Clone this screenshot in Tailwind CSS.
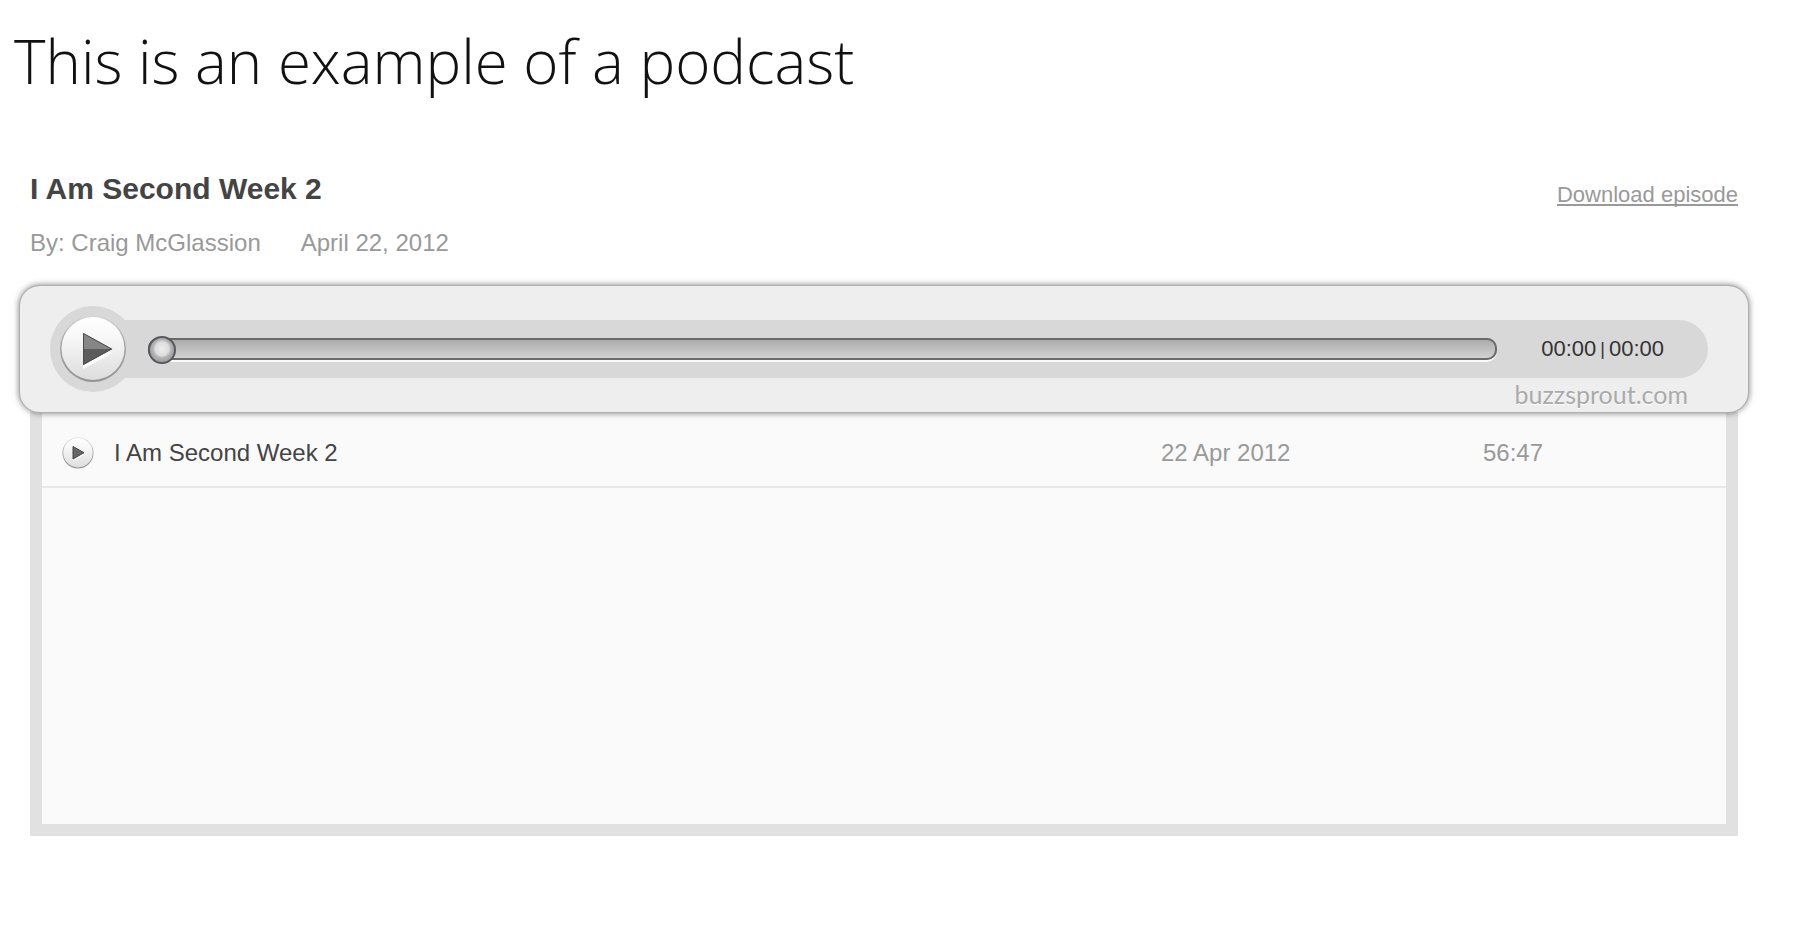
<!DOCTYPE html>
<html lang="en">
  <head>
    <meta charset="UTF-8" />
    <meta name="viewport" content="width=device-width, initial-scale=1" />
    <title>This is an example of a podcast</title>
    <script src="https://cdn.jsdelivr.net/npm/@tailwindcss/browser@4"></script>
  </head>
  <body class="bg-white min-h-screen font-['Liberation_Sans',Arial,sans-serif]">
    <h1 class="pt-[31px] pl-3.5 text-6xl/[60px] font-light text-[#111] font-['Open_Sans',sans-serif]">
      This is an example of a podcast
    </h1>

    <main class="mt-20 ml-5 mr-14">
      <!-- episode info -->
      <header class="flex items-start justify-between px-2.5">
        <div>
          <h2 class="text-3xl/9 font-bold text-[#444]">I Am Second Week 2</h2>
          <p class="mt-5 flex gap-10 text-2xl text-[#999]">
            <span>By: Craig McGlassion</span>
            <span>April 22, 2012</span>
          </p>
        </div>
        <a href="#" class="mt-2.5 text-[22px]/7 text-[#999] underline decoration-2 underline-offset-2 [text-decoration-skip-ink:none]">Download episode</a>
      </header>

      <!-- player -->
      <section class="relative mt-[27px] rounded-[20px] bg-[#eee] pt-5 pb-2 pl-[30px] pr-10 shadow-[0_0_0_1px_#b0b0b0,0_0_6px_1px_rgba(0,0,0,0.5)]">
        <div class="flex items-center">
          <div class="z-10 flex size-[86px] shrink-0 items-center justify-center rounded-full bg-[#d8d8d8]">
            <button type="button" id="play" aria-label="Play" class="size-[66px]">
              <svg viewBox="0 0 66 66" class="size-full">
                <defs>
                  <linearGradient id="face" x1="0" y1="0" x2="0" y2="1">
                    <stop offset="0" stop-color="#fff" />
                    <stop offset="0.3" stop-color="#f8f8f8" />
                    <stop offset="1" stop-color="#ddd" />
                  </linearGradient>
                  <linearGradient id="rim" x1="0" y1="0" x2="0" y2="1">
                    <stop offset="0" stop-color="#d2d2d2" />
                    <stop offset="0.4" stop-color="#a6a6a6" />
                    <stop offset="1" stop-color="#949494" />
                  </linearGradient>
                </defs>
                <circle cx="33" cy="33" r="33" fill="url(#rim)" />
                <circle cx="33" cy="32.5" r="31.5" fill="url(#face)" />
                <path d="M23 20v33l29.500-16z" fill="#fff" />
                <path d="M23 17v16h29.500z" fill="#868686" />
                <path d="M23 33v16l29.500-16z" fill="#5c5c5c" />
                <path d="M23.500 17.500v31l28-15.500z" fill="none" stroke="#4a4a4a" />
              </svg>
            </button>
          </div>
          <div class="-ml-3.5 flex h-[58px] flex-1 items-center rounded-r-full bg-[#d8d8d8] pl-[26px] pr-11">
            <input
              type="range"
              id="seek"
              aria-label="Seek"
              min="0"
              max="3407"
              value="0"
              class="h-7 min-w-0 flex-1 appearance-none bg-transparent [&::-webkit-slider-runnable-track]:h-[22px] [&::-webkit-slider-runnable-track]:rounded-[10px] [&::-webkit-slider-runnable-track]:bg-linear-to-b [&::-webkit-slider-runnable-track]:from-[#a8a8a8] [&::-webkit-slider-runnable-track]:to-[#d6d6d6] [&::-webkit-slider-runnable-track]:shadow-[inset_0_0_0_2px_#6a6a6a,0_2px_0_#fafafa] [&::-webkit-slider-thumb]:-mt-0.5 [&::-webkit-slider-thumb]:size-7 [&::-webkit-slider-thumb]:appearance-none [&::-webkit-slider-thumb]:rounded-full [&::-webkit-slider-thumb]:border-2 [&::-webkit-slider-thumb]:border-[#585860] [&::-webkit-slider-thumb]:bg-[radial-gradient(circle_at_50%_45%,#eee_0,#dcdcdc_7px,#b4b4b4_9px,#a4a4a4_12px)]"
            />
            <p class="ml-11 flex items-center gap-1 text-[22px]/7 text-[#333]">
              <span id="elapsed">00:00</span>
              <span class="text-lg/7">|</span>
              <span id="total">00:00</span>
            </p>
          </div>
        </div>
        <p class="-mt-2 flex justify-end pr-5">
          <a href="#" class="text-[25px]/5 text-[#aaa] font-['Lato',sans-serif] text-shadow-[0_1px_0_#fff]">buzzsprout.com</a>
        </p>
      </section>

      <!-- episode list -->
      <div class="mx-2.5 min-h-[424px] border-x-[12px] border-b-[12px] border-[#e1e1e1] bg-[#fafafa]">
        <table class="w-full table-fixed text-left text-2xl">
          <tbody>
            <tr class="border-b-2 border-[#e8e8e8]">
              <td class="pt-[25px] pb-[17px] pl-5">
                <button type="button" class="flex items-center gap-5 text-[#444]">
                  <svg viewBox="0 0 32 32" class="size-8">
                    <circle cx="16" cy="16" r="15.500" fill="url(#rim)" />
                    <circle cx="16" cy="15.700" r="14.700" fill="url(#face)" />
                    <path d="M11 12v12l11-6.500z" fill="#fff" />
                    <path d="M11 9.500v12.500l11-6.300z" fill="#666" stroke="#444" />
                  </svg>
                  I Am Second Week 2
                </button>
              </td>
              <td class="w-[322px] pt-[25px] pb-[17px] text-[#999]">22 Apr 2012</td>
              <td class="w-[243px] pt-[25px] pb-[17px] text-[#999]">56:47</td>
            </tr>
          </tbody>
        </table>
      </div>
    </main>

    <script>
      const seek = document.getElementById("seek");
      const elapsed = document.getElementById("elapsed");

      // show the position as mm:ss
      seek.addEventListener("input", () => {
        const min = String(Math.floor(seek.value / 60)).padStart(2, "0");
        const sec = String(seek.value % 60).padStart(2, "0");
        elapsed.textContent = `${min}:${sec}`;
      });
    </script>
  </body>
</html>
